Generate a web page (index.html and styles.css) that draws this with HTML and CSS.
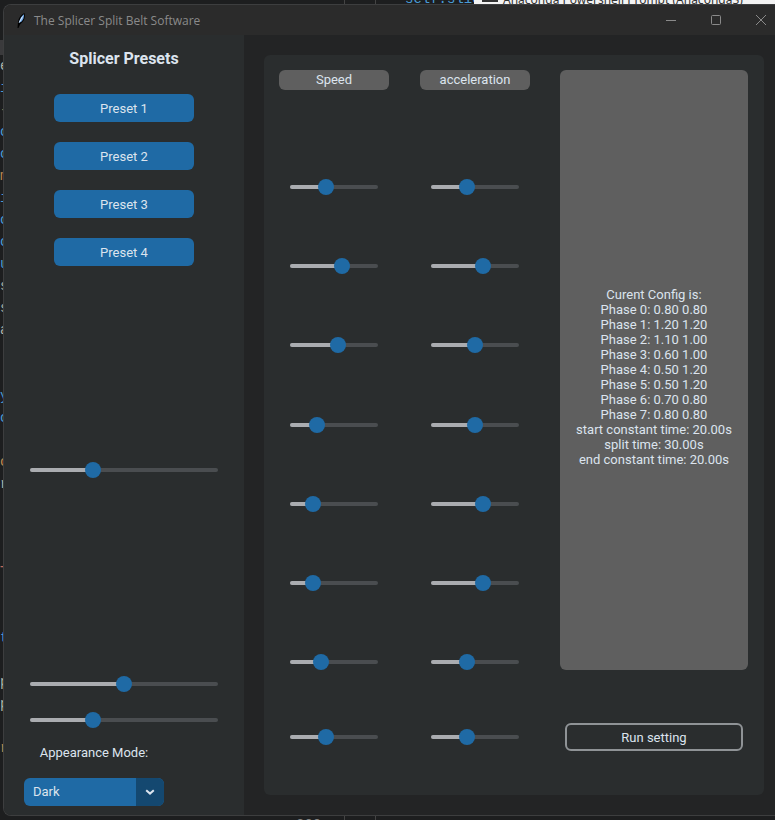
FILE: index.html
```html
<!DOCTYPE html>
<html lang="en">
<head>
    <meta charset="UTF-8">
    <meta name="viewport" content="width=device-width, initial-scale=1.0">
    <title>The Splicer Split Belt Software</title>
    <link rel="stylesheet" href="styles.css">
</head>
<body>

<!-- what shows around the window: an editor and a terminal tab behind it -->
<div class="behind-top">
    <span class="line-no">357</span>
    <span class="code-top">self.slid</span>
    <span class="rule rule-a"></span>
    <span class="rule rule-b"></span>
    <div class="term-tab"><span class="term-icon"></span>Anaconda Powershell Prompt (Anaconda3)</div>
</div>
<div class="behind-left">
    <div class="edge-band"></div>
    <div class="l-w">e</div>
    <div class="l-b">i</div>
    <div class="l-o">-</div>
    <div class="l-b">c</div>
    <div class="l-b">c</div>
    <div class="l-o">m</div>
    <div class="l-b">i</div>
    <div class="l-b">c</div>
    <div class="l-b">c</div>
    <div class="l-b">u</div>
    <div class="l-w">s</div>
    <div class="l-w">s</div>
    <div class="l-w">a</div>
    <div>&nbsp;</div>
    <div>&nbsp;</div>
    <div class="l-b">y</div>
    <div class="l-b">c</div>
    <div>&nbsp;</div>
    <div class="l-o">c</div>
    <div class="l-w">r</div>
    <div>&nbsp;</div>
    <div>&nbsp;</div>
    <div>&nbsp;</div>
    <div class="l-r">T</div>
    <div>&nbsp;</div>
    <div>&nbsp;</div>
    <div class="l-b">t</div>
    <div>&nbsp;</div>
    <div class="l-w">p</div>
    <div class="l-w">p</div>
    <div>&nbsp;</div>
    <div class="l-o">r</div>
</div>
<div class="behind-bottom">
    <span class="line-no">300</span>
    <span class="rule rule-a"></span>
    <span class="rule rule-b"></span>
</div>

<div class="window">
    <div class="titlebar">
        <svg class="feather" width="10" height="17" viewBox="0 0 10 17">
            <path d="M1.5 16 L2 10 C2.5 6 5 2.5 8.5 1 C9.5 4 8.5 8 6.5 10 L4 12.5 L2.5 16 Z" fill="#000"/>
            <path d="M3 11 C3.5 7 5.5 4 8 2.2 C8.3 5 7 8 5.5 9.5 Z" fill="#6fa8e8"/>
            <path d="M3.2 10.5 L6.5 4.5" stroke="#dfeaf8" stroke-width="1" fill="none"/>
        </svg>
        <span class="app-name">The Splicer Split Belt Software</span>
        <div class="win-buttons">
            <svg width="12" height="12" viewBox="0 0 12 12"><path d="M1 6.5 H11" stroke="#8a8a8a" fill="none"/></svg>
            <svg width="12" height="12" viewBox="0 0 12 12"><rect x="1.5" y="1.5" width="9" height="9" rx="1" stroke="#8a8a8a" fill="none"/></svg>
            <svg width="12" height="12" viewBox="0 0 12 12"><path d="M1 1 L11 11 M11 1 L1 11" stroke="#8a8a8a" fill="none"/></svg>
        </div>
    </div>

    <div class="content">
        <aside class="sidebar">
            <h1 class="side-title">Splicer Presets</h1>
            <div class="presets">
                <button class="btn">Preset 1</button>
                <button class="btn">Preset 2</button>
                <button class="btn">Preset 3</button>
                <button class="btn">Preset 4</button>
            </div>

            <div class="slider slider-wide first-wide"><div class="fill" style="width: 33.5%"><span class="knob"></span></div></div>
            <div class="slider slider-wide second-wide"><div class="fill" style="width: 50%"><span class="knob"></span></div></div>
            <div class="slider slider-wide third-wide"><div class="fill" style="width: 33.5%"><span class="knob"></span></div></div>

            <div class="appearance">
                <div class="appearance-label">Appearance Mode:</div>
                <div class="dropdown">
                    <span class="dropdown-value">Dark</span>
                    <span class="dropdown-arrow">
                        <svg width="10" height="6" viewBox="0 0 10 6"><path d="M1.2 1.2 L5 4.6 L8.8 1.2" stroke="#dce4ee" stroke-width="2" fill="none"/></svg>
                    </span>
                </div>
            </div>
        </aside>

        <main class="main">
            <div class="panel">
                <section class="column speed">
                    <div class="column-head">Speed</div>
                    <div class="slider-list">
                        <div class="slider"><div class="fill" style="width: 40.9%"><span class="knob"></span></div></div>
                        <div class="slider"><div class="fill" style="width: 59.1%"><span class="knob"></span></div></div>
                        <div class="slider"><div class="fill" style="width: 54.5%"><span class="knob"></span></div></div>
                        <div class="slider"><div class="fill" style="width: 30.7%"><span class="knob"></span></div></div>
                        <div class="slider"><div class="fill" style="width: 26.1%"><span class="knob"></span></div></div>
                        <div class="slider"><div class="fill" style="width: 26.1%"><span class="knob"></span></div></div>
                        <div class="slider"><div class="fill" style="width: 35.2%"><span class="knob"></span></div></div>
                        <div class="slider"><div class="fill" style="width: 40.9%"><span class="knob"></span></div></div>
                    </div>
                </section>
                <section class="column accel">
                    <div class="column-head">acceleration</div>
                    <div class="slider-list">
                        <div class="slider"><div class="fill" style="width: 40.9%"><span class="knob"></span></div></div>
                        <div class="slider"><div class="fill" style="width: 59.1%"><span class="knob"></span></div></div>
                        <div class="slider"><div class="fill" style="width: 50%"><span class="knob"></span></div></div>
                        <div class="slider"><div class="fill" style="width: 50%"><span class="knob"></span></div></div>
                        <div class="slider"><div class="fill" style="width: 59.1%"><span class="knob"></span></div></div>
                        <div class="slider"><div class="fill" style="width: 59.1%"><span class="knob"></span></div></div>
                        <div class="slider"><div class="fill" style="width: 40.9%"><span class="knob"></span></div></div>
                        <div class="slider"><div class="fill" style="width: 40.9%"><span class="knob"></span></div></div>
                    </div>
                </section>
                <section class="config-col">
                    <div class="config-box">
                        <div>Curent Config is:</div>
                        <div>Phase 0: 0.80 0.80</div>
                        <div>Phase 1: 1.20 1.20</div>
                        <div>Phase 2: 1.10 1.00</div>
                        <div>Phase 3: 0.60 1.00</div>
                        <div>Phase 4: 0.50 1.20</div>
                        <div>Phase 5: 0.50 1.20</div>
                        <div>Phase 6: 0.70 0.80</div>
                        <div>Phase 7: 0.80 0.80</div>
                        <div>start constant time: 20.00s</div>
                        <div>split time: 30.00s</div>
                        <div>end constant time: 20.00s</div>
                    </div>
                    <button class="run-btn">Run setting</button>
                </section>
            </div>
        </main>
    </div>
</div>

</body>
</html>
```

FILE: styles.css
```css
* {
    box-sizing: border-box;
}
html, body {
    height: 820px;
}
body {
    margin: 0;
    background-color: #1d1e1f;
    color: #dce4ee;
    font-family: Roboto, "Liberation Sans", sans-serif;
    font-size: 13px;
    overflow: hidden;
    position: relative;
}

/* things behind the window */
.behind-top {
    position: absolute;
    top: 0;
    left: 0;
    width: 775px;
    height: 4px;
    overflow: hidden;
}
.behind-bottom {
    position: absolute;
    top: 816px;
    left: 0;
    width: 775px;
    height: 4px;
    overflow: hidden;
}
.line-no {
    position: absolute;
    left: 296px;
    top: -12px;
    font: 14px/16px "Liberation Mono", monospace;
    color: #858585;
}
.behind-bottom .line-no {
    top: 1px;
}
.code-top {
    position: absolute;
    left: 405px;
    top: -9px;
    font: 14px/16px "Liberation Mono", monospace;
    color: #4a9bd6;
}
.rule {
    position: absolute;
    top: 0;
    width: 1px;
    height: 4px;
    background-color: #444;
}
.rule-a {
    left: 344px;
}
.rule-b {
    left: 375px;
}
.term-tab {
    position: absolute;
    left: 474px;
    top: 0;
    width: 301px;
    height: 4px;
    background-color: #f3f3f3;
    color: #333;
    font: 12px/1 "Noto Sans", sans-serif;
    white-space: nowrap;
    padding-left: 29px;
    line-height: 0;
}
.term-icon {
    position: absolute;
    left: 8px;
    top: 0;
    width: 16px;
    height: 2px;
    background-color: #333;
}
.behind-left {
    position: absolute;
    top: 40px;
    left: 0;
    width: 3px;
    overflow: hidden;
    font: 14px/22px "Liberation Mono", monospace;
    background-color: #1d1e1f;
}
.edge-band {
    height: 15px;
    background-color: #3a3a3c;
}
.l-w {
    color: #b0b4a8;
}
.l-b {
    color: #4a9bd6;
}
.l-o {
    color: #c08a50;
}
.l-r {
    color: #c06a5a;
}

/* window */
.window {
    position: relative;
    margin: 4px 0 0 3px;
    width: 772px;
    height: 812px;
    background-color: #232425;
    border: 1px solid #3d3e3f;
    border-right: none;
    border-radius: 8px 0 0 8px;
    overflow: hidden;
}
.titlebar {
    height: 30px;
    background-color: #2b2b2b;
    display: flex;
    align-items: center;
    padding-left: 12px;
}
.feather {
    margin-right: 8px;
}
.app-name {
    font-family: "Open Sans", sans-serif;
    font-size: 12px;
    color: #8a8a8a;
}
.win-buttons {
    margin-left: auto;
    display: flex;
    gap: 33px;
    padding-right: 8px;
}
.content {
    display: flex;
    height: 780px;
}

/* left side */
.sidebar {
    width: 240px;
    background-color: #2a2d2e;
    display: flex;
    flex-direction: column;
    align-items: center;
}
.side-title {
    margin: 14px 0 0;
    font-size: 16px;
    line-height: 20px;
    font-weight: 700;
    color: #dce4ee;
}
.presets {
    margin-top: 25px;
    display: flex;
    flex-direction: column;
    gap: 20px;
}
.btn {
    width: 140px;
    height: 28px;
    border: none;
    border-radius: 6px;
    background-color: #1f6aa5;
    color: #dce4ee;
    font-family: Roboto, sans-serif;
    font-size: 13px;
    padding: 0;
}
.slider-wide {
    width: 188px;
}
.first-wide {
    margin-top: 202px;
}
.second-wide {
    margin-top: 210px;
}
.third-wide {
    margin-top: 32px;
}
.appearance {
    align-self: flex-start;
    margin: 23px 0 0 20px;
    width: 140px;
}
.appearance-label {
    text-align: center;
    line-height: 16px;
}
.dropdown {
    margin-top: 17px;
    height: 28px;
    display: flex;
    border-radius: 6px;
    overflow: hidden;
    background-color: #1f6aa5;
}
.dropdown-value {
    flex: 1;
    padding-left: 9px;
    line-height: 28px;
}
.dropdown-arrow {
    width: 28px;
    background-color: #144870;
    display: flex;
    align-items: center;
    justify-content: center;
}

/* sliders */
.slider {
    width: 88px;
    height: 4px;
    border-radius: 2px;
    background-color: #4a4d50;
}
.slider-wide {
    width: 188px;
}
.fill {
    position: relative;
    height: 4px;
    border-radius: 2px;
    background-color: #aaacb0;
}
.knob {
    position: absolute;
    right: -8px;
    top: -6px;
    width: 16px;
    height: 16px;
    border-radius: 50%;
    background-color: #1f6aa5;
}

/* right side */
.main {
    flex: 1;
    padding: 20px 0 0 20px;
}
.panel {
    width: 500px;
    height: 740px;
    background-color: #2a2d2e;
    border-radius: 6px;
    display: flex;
    padding: 15px 0 0 15px;
}
.column {
    width: 110px;
    display: flex;
    flex-direction: column;
    align-items: center;
}
.speed {
    margin-right: 31px;
}
.accel {
    margin-right: 30px;
}
.column-head {
    width: 110px;
    height: 20px;
    border-radius: 6px;
    background-color: #5f5f5f;
    text-align: center;
    line-height: 20px;
}
.slider-list {
    margin-top: 95px;
    display: grid;
    grid-template-rows: 79px 79px 80px 79px 79px 79px 75px 4px;
}
.config-col {
    width: 188px;
    display: flex;
    flex-direction: column;
    align-items: center;
}
.config-box {
    width: 188px;
    height: 600px;
    border-radius: 6px;
    background-color: #5f5f5f;
    display: flex;
    flex-direction: column;
    justify-content: center;
    align-items: center;
    padding-top: 13px;
    line-height: 15px;
}
.run-btn {
    margin-top: 53px;
    width: 178px;
    height: 28px;
    border: 2px solid #8f9396;
    border-radius: 6px;
    background: transparent;
    color: #dce4ee;
    font-family: Roboto, sans-serif;
    font-size: 13px;
    padding: 0;
}
```
